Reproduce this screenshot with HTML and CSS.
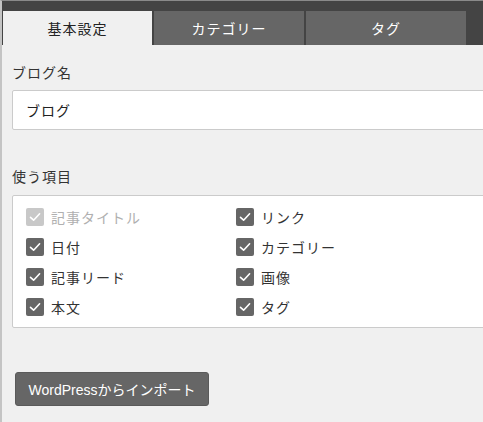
FILE: index.html
```html
<!DOCTYPE html>
<html lang="ja">
<head>
<meta charset="utf-8">
<title>設定</title>
<link rel="stylesheet" href="styles.css">
</head>
<body>
<div class="app">
  <div class="tabbar">
    <div class="tab tab-active tab-1">基本設定</div>
    <div class="tab tab-2">カテゴリー</div>
    <div class="tab tab-3">タグ</div>
  </div>
  <div class="content">
    <div class="label label-first">ブログ名</div>
    <div class="input">ブログ</div>

    <div class="label label-second">使う項目</div>
    <div class="box">
      <div class="grid">
        <div class="item item-disabled"><span class="cb"><svg viewBox="0 0 18 18" width="18" height="18"><path d="M4.5 9.3 L7.6 12.2 L13.6 5.8" fill="none" stroke="#fff" stroke-width="1.6" stroke-linecap="round" stroke-linejoin="round"/></svg></span>記事タイトル</div>
        <div class="item"><span class="cb"><svg viewBox="0 0 18 18" width="18" height="18"><path d="M4.5 9.3 L7.6 12.2 L13.6 5.8" fill="none" stroke="#fff" stroke-width="1.6" stroke-linecap="round" stroke-linejoin="round"/></svg></span>リンク</div>
        <div class="item"><span class="cb"><svg viewBox="0 0 18 18" width="18" height="18"><path d="M4.5 9.3 L7.6 12.2 L13.6 5.8" fill="none" stroke="#fff" stroke-width="1.6" stroke-linecap="round" stroke-linejoin="round"/></svg></span>日付</div>
        <div class="item"><span class="cb"><svg viewBox="0 0 18 18" width="18" height="18"><path d="M4.5 9.3 L7.6 12.2 L13.6 5.8" fill="none" stroke="#fff" stroke-width="1.6" stroke-linecap="round" stroke-linejoin="round"/></svg></span>カテゴリー</div>
        <div class="item"><span class="cb"><svg viewBox="0 0 18 18" width="18" height="18"><path d="M4.5 9.3 L7.6 12.2 L13.6 5.8" fill="none" stroke="#fff" stroke-width="1.6" stroke-linecap="round" stroke-linejoin="round"/></svg></span>記事リード</div>
        <div class="item"><span class="cb"><svg viewBox="0 0 18 18" width="18" height="18"><path d="M4.5 9.3 L7.6 12.2 L13.6 5.8" fill="none" stroke="#fff" stroke-width="1.6" stroke-linecap="round" stroke-linejoin="round"/></svg></span>画像</div>
        <div class="item"><span class="cb"><svg viewBox="0 0 18 18" width="18" height="18"><path d="M4.5 9.3 L7.6 12.2 L13.6 5.8" fill="none" stroke="#fff" stroke-width="1.6" stroke-linecap="round" stroke-linejoin="round"/></svg></span>本文</div>
        <div class="item"><span class="cb"><svg viewBox="0 0 18 18" width="18" height="18"><path d="M4.5 9.3 L7.6 12.2 L13.6 5.8" fill="none" stroke="#fff" stroke-width="1.6" stroke-linecap="round" stroke-linejoin="round"/></svg></span>タグ</div>
      </div>
    </div>

    <button class="btn" type="button">WordPressからインポート</button>
  </div>
</div>
</body>
</html>
```
FILE: styles.css
```css
html, body {
  margin: 0;
  padding: 0;
  background: #f0f0f0;
  overflow: hidden;
}
body {
  font-family: "Liberation Sans", "Noto Sans CJK JP", sans-serif;
  font-size: 14px;
  color: #222;
}
.app {
  border-left: 2px solid #c4c4c4;
  border-top: 1px solid #8a8a8a;
  min-height: 421px;
  box-sizing: border-box;
  overflow: hidden;
}
.tabbar {
  background: #444;
  padding: 10px 0 0 1px;
  display: flex;
  gap: 2px;
}
.tab {
  height: 34px;
  display: flex;
  align-items: center;
  justify-content: center;
  background: #666;
  color: #fff;
  font-size: 14px;
  letter-spacing: 1px;
}
.tab-1 { width: 149px; }
.tab-2 { width: 150px; }
.tab-3 { width: 160px; }
.tab-active {
  background: #f0f0f0;
  color: #222;
}
.content {
  padding: 0 0 20px 10px;
}
.label {
  line-height: 20px;
  color: #333;
  letter-spacing: 1px;
}
.label-first {
  padding-top: 18px;
  margin-bottom: 7px;
}
.label-second {
  margin-top: 37px;
  margin-bottom: 8px;
}
.input {
  height: 38px;
  margin-right: -20px;
  background: #fff;
  border: 1px solid #cbcbcb;
  border-radius: 2px;
  padding-left: 13px;
  display: flex;
  align-items: center;
  letter-spacing: 1px;
  color: #222;
}
.box {
  margin-right: -20px;
  background: #fff;
  border: 1px solid #cbcbcb;
  border-radius: 2px;
  padding: 6px 0 5px 13px;
}
.grid {
  display: grid;
  grid-template-columns: 210px 1fr;
  grid-auto-rows: 30px;
}
.item {
  display: flex;
  align-items: center;
  gap: 7px;
  color: #333;
  letter-spacing: 1px;
}
.cb {
  width: 18px;
  height: 18px;
  border-radius: 2px;
  background: #666;
  display: flex;
  flex: none;
}
.item-disabled {
  color: #b0b0b0;
}
.item-disabled .cb {
  background: #c8c8c8;
}
.btn {
  display: block;
  margin: 44px 0 0 3px;
  width: 194px;
  height: 34px;
  background: #666;
  border: 1px solid #5a5a5a;
  border-radius: 3px;
  color: #fff;
  font-family: "Liberation Sans", "Noto Sans CJK JP", sans-serif;
  font-size: 14px;
  padding: 0;
}
```
